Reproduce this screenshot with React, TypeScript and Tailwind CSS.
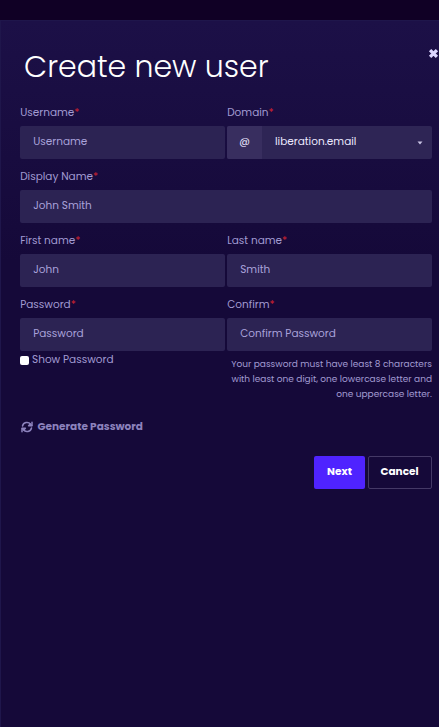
import { useState, type ReactNode } from "react";

type FieldProps = {
  label: string;
  className?: string;
  children: ReactNode;
};

function Field({ label, className = "", children }: FieldProps) {
  return (
    <div className={className}>
      <label className="block h-[26px] pl-[0.2px] leading-[25px]">
        {label}
        <span className="text-[#cf222f]">*</span>
      </label>
      {children}
    </div>
  );
}

type TextInputProps = {
  placeholder: string;
  type?: string;
};

function TextInput({ placeholder, type = "text" }: TextInputProps) {
  return (
    <input
      type={type}
      placeholder={placeholder}
      className="block h-[33px] w-full rounded-[2px] bg-[#2c2353] px-[13.2px] pb-[2px] text-white outline-none placeholder:text-[#a9a2da]"
    />
  );
}

function SyncIcon() {
  return (
    <svg
      viewBox="0 0 12 12"
      className="size-3"
      fill="none"
      stroke="currentColor"
      strokeWidth="1.5"
      strokeLinejoin="round"
      strokeLinecap="round"
    >
      <path d="M1.5 5A4.6 4.6 0 0 1 9.6 3.2L10.7 4.4" />
      <path d="M11 1.3V4.7H7.6L9.2 3.1" />
      <path d="M10.5 7A4.6 4.6 0 0 1 2.4 8.8L1.3 7.6" />
      <path d="M1 10.7V7.3H4.4L2.8 8.9" />
    </svg>
  );
}

export default function App() {
  const [showPassword, setShowPassword] = useState(false);
  const passwordType = showPassword ? "text" : "password";

  return (
    <div className="flex h-[727px] w-full flex-col overflow-hidden bg-[#100025] font-[Poppins,Inter,sans-serif] text-[10.5px] text-[#a29bd2]">
      <div className="h-5 shrink-0" />
      <main className="relative flex-1 border-t border-l border-[#1f164b] bg-[#150939] bg-[linear-gradient(#1c1047_0px,#150939_240px)] pr-[7px] pl-[19px]">
        <button
          type="button"
          aria-label="Close"
          className="absolute top-[27px] right-[0.5px] text-[#dcd6ff]"
        >
          <svg viewBox="0 0 9 9" className="size-[11px]">
            <path
              d="M1.7 1.7 7.3 7.3M7.3 1.7 1.7 7.3"
              stroke="currentColor"
              strokeWidth="2.7"
            />
          </svg>
        </button>

        <h1 className="h-[79px] pt-[24px] pl-[4px] text-[30px] leading-[44px] font-light whitespace-nowrap text-white">
          Create new user
        </h1>

        <form className="grid grid-cols-2 gap-x-[2px] gap-y-[5px]">
          <Field label="Username">
            <TextInput placeholder="Username" />
          </Field>
          <Field label="Domain">
            <div className="flex h-[33px] overflow-hidden rounded-[2px] bg-[#2e2555] text-[#ece9ff]">
              <span className="flex w-[35px] items-center justify-center bg-[#382e5f] pb-px">
                @
              </span>
              <div className="flex flex-1 items-center justify-between pr-[9px] pl-[13px]">
                <span className="pb-[2px]">liberation.email</span>
                <svg viewBox="0 0 6 4" className="h-[4px] w-[6px]">
                  <path d="M.5.4h5L3 3.6z" fill="#c9c4e4" />
                </svg>
              </div>
            </div>
          </Field>
          <Field label="Display Name" className="col-span-2">
            <TextInput placeholder="John Smith" />
          </Field>
          <Field label="First name">
            <TextInput placeholder="John" />
          </Field>
          <Field label="Last name">
            <TextInput placeholder="Smith" />
          </Field>
          <Field label="Password">
            <TextInput placeholder="Password" type={passwordType} />
            <label className="flex h-[17px] items-center gap-[3px]">
              <input
                type="checkbox"
                checked={showPassword}
                onChange={(e) => setShowPassword(e.target.checked)}
                className="mt-[2px] size-[9px] appearance-none rounded-[2px] bg-white checked:bg-[#4f23ff]"
              />
              Show Password
            </label>
          </Field>
          <Field label="Confirm">
            <TextInput placeholder="Confirm Password" type={passwordType} />
            <p className="pt-[6px] text-right text-[9px] leading-[15px] whitespace-nowrap">
              Your password must have least 8 characters
              <br />
              with least one digit, one lowercase letter and
              <br />
              one uppercase letter.
            </p>
          </Field>
        </form>

        <button
          type="button"
          className="mt-[15px] flex h-[20px] items-center gap-[5px] pl-[0.5px] font-bold text-[#8c82bd]"
        >
          <SyncIcon />
          Generate Password
        </button>

        <div className="mt-[19px] flex justify-end gap-[3px] font-bold text-white">
          <button
            type="button"
            className="h-[33px] w-[51px] rounded-[2px] bg-[#4f23ff] pb-[2px]"
          >
            Next
          </button>
          <button
            type="button"
            className="h-[33px] w-[64px] rounded-[2px] border border-[#443966] pr-px pb-[2px]"
          >
            Cancel
          </button>
        </div>
      </main>
    </div>
  );
}
